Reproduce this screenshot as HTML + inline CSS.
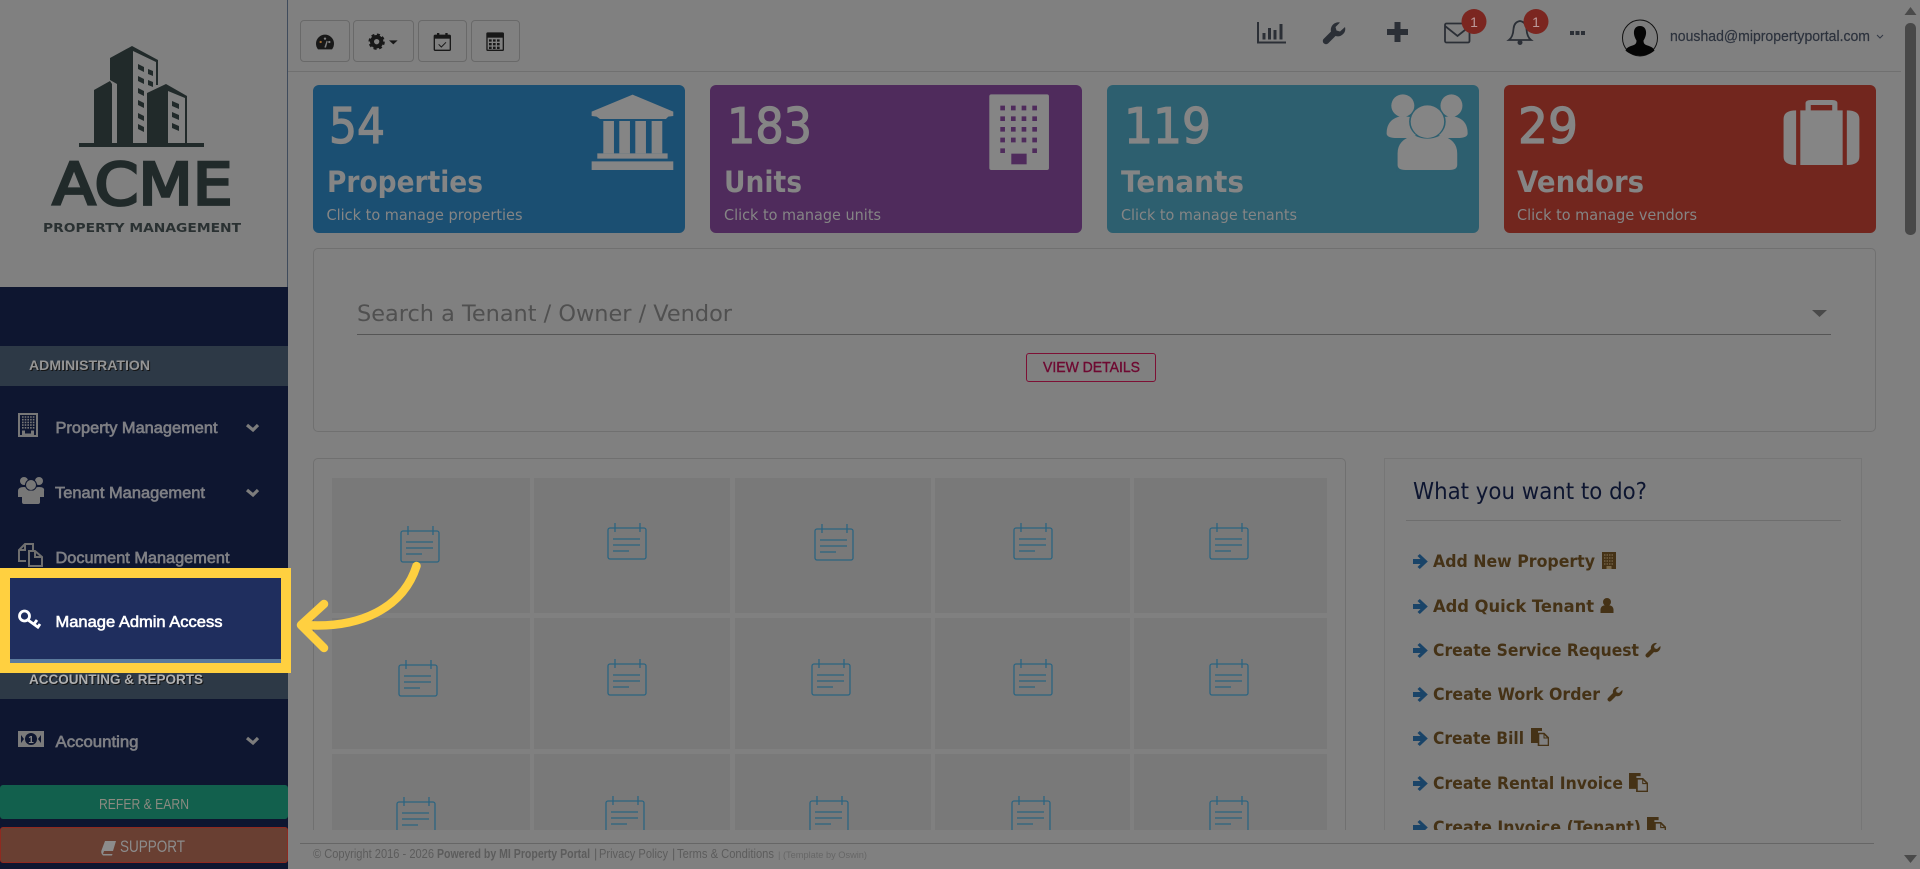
<!DOCTYPE html>
<html lang="en"><head><meta charset="utf-8"><title>Dashboard</title>
<style>
html,body{margin:0;padding:0;width:1920px;height:869px;overflow:hidden;background:#808080}
#root{position:relative;width:1920px;height:869px;overflow:hidden;background:#808080}
.b{position:absolute;box-sizing:border-box}
.btn{border:1px solid #696969;border-radius:4px;top:20px;height:42px}
.card{top:85px;height:148px;width:372px;border-radius:6px}
.tile{background:#797979}
svg#L{position:absolute;left:0;top:0}
text{font-family:"Liberation Sans",sans-serif}
.d{font-family:"DejaVu Sans",sans-serif}
.num{font-family:"DejaVu Sans",sans-serif;font-size:49px;fill:#858585;stroke:#858585;stroke-width:1.3px}
.ttl{font-family:"DejaVu Sans",sans-serif;font-size:29px;font-weight:700;fill:#858585}
.sub{font-family:"DejaVu Sans",sans-serif;font-size:15px;fill:#858585}
.act{font-family:"DejaVu Sans",sans-serif;font-size:16.5px;font-weight:700;fill:#453216}
.nav{font-size:16px;fill:#7e7f84;stroke:#7e7f84;stroke-width:.65px}
.hd{font-size:14px;font-weight:700;filter:drop-shadow(1px 1px 0 #151515)}
.ft{font-size:12.5px;fill:#5c5c5c}
</style></head><body>
<div id="root">
<!-- sidebar -->
<div class="b" style="left:0;top:0;width:288px;height:287px;background:#808080;border-right:1px solid #3f4b5c"></div>
<div class="b" style="left:0;top:287px;width:288px;height:582px;background:#0e1630"></div>
<div class="b" style="left:0;top:346px;width:288px;height:40px;background:#2d3946"></div>
<div class="b" style="left:0;top:660px;width:288px;height:39px;background:#2d3946"></div>
<div class="b" style="left:0;top:785px;width:288px;height:34px;background:#12604d;border-radius:3px"></div>
<div class="b" style="left:0;top:827px;width:288px;height:36px;background:#693f32;border:1px solid #8f2a20;border-radius:3px"></div>
<!-- toolbar -->
<div class="b" style="left:288px;top:71px;width:1613px;height:1px;background:#707070"></div>
<div class="b btn" style="left:300px;width:50px"></div>
<div class="b btn" style="left:353px;width:61px"></div>
<div class="b btn" style="left:418px;width:49px"></div>
<div class="b btn" style="left:471px;width:49px"></div>
<!-- cards -->
<div class="b card" style="left:313px;background:#1b4f72"></div>
<div class="b card" style="left:710px;background:#4f2b5c"></div>
<div class="b card" style="left:1107px;background:#2d5f6f"></div>
<div class="b card" style="left:1504px;background:#72261e"></div>
<!-- panels -->
<div class="b" style="left:313px;top:248px;width:1563px;height:184px;border:1px solid #707070;border-radius:5px"></div>
<div class="b" style="left:357px;top:334px;width:1474px;height:1px;background:#555"></div>
<div class="b" style="left:1026px;top:353px;width:130px;height:29px;border:1px solid #7d1035;border-radius:3px"></div>
<div class="b" style="left:313px;top:458px;width:1033px;height:390px;border:1px solid #707070;border-radius:5px"></div>
<div class="b" style="left:1384px;top:458px;width:478px;height:390px;border:1px solid #767676"></div>
<div class="b" style="left:1406px;top:520px;width:435px;height:1px;background:#6e6e6e"></div>
<!-- tiles -->
<div class="b tile" style="left:332px;top:478px;width:198px;height:135px"></div>
<div class="b tile" style="left:534px;top:478px;width:196px;height:135px"></div>
<div class="b tile" style="left:735px;top:478px;width:196px;height:135px"></div>
<div class="b tile" style="left:935px;top:478px;width:195px;height:135px"></div>
<div class="b tile" style="left:1134px;top:478px;width:193px;height:135px"></div>
<div class="b tile" style="left:332px;top:618px;width:198px;height:131px"></div>
<div class="b tile" style="left:534px;top:618px;width:196px;height:131px"></div>
<div class="b tile" style="left:735px;top:618px;width:196px;height:131px"></div>
<div class="b tile" style="left:935px;top:618px;width:195px;height:131px"></div>
<div class="b tile" style="left:1134px;top:618px;width:193px;height:131px"></div>
<div class="b tile" style="left:332px;top:754px;width:198px;height:90px"></div>
<div class="b tile" style="left:534px;top:754px;width:196px;height:90px"></div>
<div class="b tile" style="left:735px;top:754px;width:196px;height:90px"></div>
<div class="b tile" style="left:935px;top:754px;width:195px;height:90px"></div>
<div class="b tile" style="left:1134px;top:754px;width:193px;height:90px"></div>

<svg id="L" width="1920" height="869" viewBox="0 0 1920 869" xmlns="http://www.w3.org/2000/svg">
<defs>
<symbol id="cal" viewBox="0 0 40 37" width="40" height="37" overflow="visible"><g fill="none" stroke="#2c6480" stroke-width="1.3"><rect x="1" y="5" width="38" height="31" rx="2"/><path d="M8 0V9M33 0V9"/><path d="M6 16H33M6 22H33M6 28H22"/></g></symbol>
<symbol id="arr" viewBox="0 0 15 15" width="15" height="15"><path d="M0 5H7.500L4.500 2 6.800 0 14.800 7.500 6.800 15 4.500 13 7.500 10H0Z" fill="#1a4468"/></symbol>
<symbol id="wr" viewBox="0 0 24 24"><path d="M23 6l-5 4.500-3.500-1-1-3.500L18 1.500A7.500 7.500 0 0 0 9 10.500L1.500 18a3.200 3.200 0 0 0 4.500 4.500L13.500 15A7.500 7.500 0 0 0 23 6Z"/></symbol>
<symbol id="doc" viewBox="0 0 18 18"><path d="M0 0H11V3H7V15H0Z" fill="#453216"/><path d="M7.500 5.500H13L17.500 10V17.500H7.500Z" fill="none" stroke="#453216" stroke-width="1.600"/><path d="M13 5.500V10H17.500" fill="none" stroke="#453216" stroke-width="1"/></symbol>
</defs>

<!-- logo -->
<g fill="#212a2a">
<path d="M94 90L110 81 112 84V143H94Z"/>
<path d="M110 58L132 46 158 60V85H156V62L133 51V143H117V84L110 80Z"/>
<path d="M147 93L166 84 187 96V143H185V98L168 91V143H147Z"/>
<rect x="79" y="143" width="125" height="4"/>
<path d="M138 64l6 3v5l-6-3zM148 69l5 2v5l-5-2zM138 76l6 3v5l-6-3zM148 80l5 2v5l-5-2zM138 88l6 3v5l-6-3zM138 100l6 3v5l-6-3zM138 113l6 3v5l-6-3zM138 124l6 3v5l-6-3zM172 101l7 3v5l-7-3zM172 112l7 3v5l-7-3zM172 123l7 3v5l-7-3z"/>
<text class="d" x="52.500" y="204.500" font-size="58" stroke="#212a2a" stroke-width="2.800" textLength="180" lengthAdjust="spacingAndGlyphs">ACME</text>
<text class="d" x="43" y="232" font-size="12.500" font-weight="700" textLength="198" lengthAdjust="spacingAndGlyphs" fill="#2a3132">PROPERTY MANAGEMENT</text>
</g>

<!-- sidebar -->
<text class="hd" x="29" y="370" fill="#959595" textLength="121" lengthAdjust="spacingAndGlyphs">ADMINISTRATION</text>
<rect x="19" y="414" width="18" height="22" fill="none" stroke="#777" stroke-width="2"/>
<g fill="none" stroke="#777" stroke-width="1.600" stroke-dasharray="1.600 1.100"><path d="M22 417H34.500M22 419.700H34.500M22 422.400H34.500M22 425.100H34.500M22 427.800H34.500"/></g>
<path d="M22 430.500h3v3h6v-3h3v5H22Z" fill="#777"/>
<text class="nav" x="55.500" y="433" textLength="162" lengthAdjust="spacingAndGlyphs">Property Management</text>
<polyline points="247,425 253,430 258,425" fill="none" stroke="#7c7c7c" stroke-width="3.200"/>
<g fill="#777"><circle cx="24" cy="481" r="4"/><circle cx="39" cy="481" r="4"/><path d="M18 497v-6q0-4 6-4t6 4v6ZM33 497v-6q0-4 6-4t5 4v6Z"/><circle cx="31" cy="485" r="5.500" stroke="#0e1630"/><path d="M22 502v-6q0-5.500 9-5.500t9 5.500v6q0 2-2 2H24q-2 0-2-2Z"/></g>
<text class="nav" x="55" y="498" textLength="150" lengthAdjust="spacingAndGlyphs">Tenant Management</text>
<polyline points="247,490 253,495 258,490" fill="none" stroke="#7c7c7c" stroke-width="3.200"/>
<g fill="none" stroke="#6f6f6f" stroke-width="2"><path d="M26 561H19V550L25 544H33V551"/><path d="M25 544V550H19"/><path d="M29 551H35L42 557V566H29Z"/><path d="M35 551V557H42"/></g>
<text class="nav" x="55.500" y="563" textLength="174" lengthAdjust="spacingAndGlyphs">Document Management</text>

<text class="hd" x="29" y="684" fill="#b0b0b0" textLength="174" lengthAdjust="spacingAndGlyphs">ACCOUNTING &amp; REPORTS</text>
<rect x="18" y="731" width="26" height="16" fill="#7b7b7b"/>
<circle cx="31" cy="739" r="6" fill="#0e1630"/><path d="M21 735l3 4-3 4ZM41 735l-3 4 3 4Z" fill="#0e1630"/>
<text x="31" y="743" font-size="10" font-weight="700" fill="#888" text-anchor="middle">1</text>
<text class="nav" x="55.500" y="747" textLength="83" lengthAdjust="spacingAndGlyphs">Accounting</text>
<polyline points="247,738 253,743 258,738" fill="none" stroke="#7c7c7c" stroke-width="3.200"/>
<text x="99" y="809" font-size="15" fill="#8b8a80" textLength="90" lengthAdjust="spacingAndGlyphs">REFER &amp; EARN</text>
<path d="M105 841H116L113 851H104L103 854H112.500L112 855.500H103Q100 853 102 849Z" fill="#8c8c8c"/>
<text x="120" y="852" font-size="16.500" fill="#8c8c8c" textLength="65" lengthAdjust="spacingAndGlyphs">SUPPORT</text>

<!-- toolbar icons -->
<g transform="translate(290,0) scale(.3333)" fill="#181818">
<path d="M84 148A27 27 0 1 1 126 148Z"/><circle cx="92" cy="126" r="3.500" fill="#a06a30"/><circle cx="105" cy="116" r="3.500" fill="#808080"/><circle cx="118" cy="126" r="3.500" fill="#808080"/><path d="M103 142L110 122 113 124 108 143Z" fill="#808080"/>
<circle cx="260" cy="125" r="14" fill="none" stroke="#181818" stroke-width="12"/><circle cx="260" cy="125" r="21" fill="none" stroke="#181818" stroke-width="7" stroke-dasharray="9 7.500"/>
<path d="M297 121H323L310 133Z"/>
<rect x="433" y="106" width="48" height="45" rx="3" fill="none" stroke="#181818" stroke-width="4"/><rect x="433" y="106" width="48" height="10"/><path d="M441 99h7v12h-7zM466 99h7v12h-7z"/><path d="M446 133l8 8 14-14" fill="none" stroke="#181818" stroke-width="3"/>
<rect x="591" y="99" width="49" height="52" rx="2" fill="none" stroke="#181818" stroke-width="4"/><rect x="591" y="99" width="49" height="14"/><path d="M597 118h8v7h-8zM609 118h8v7h-8zM621 118h8v7h-8zM597 129h8v7h-8zM609 129h8v7h-8zM621 129h8v7h-8zM597 140h8v7h-8zM609 140h8v7h-8zM621 140h8v7h-8z"/>
</g>

<!-- top right -->
<g fill="none" stroke="#2b2f36" stroke-width="2">
<path d="M1258 22V42.500H1286"/>
<path d="M1264 33V39.500M1269.500 28V39.500M1275 30V39.500M1281 24V39.500" stroke-width="3"/>
</g>
<use href="#wr" x="1322" y="21" width="24" height="24" fill="#2b2f36"/>
<path d="M1394.500 22H1400.500V29H1408V35H1400.500V42H1394.500V35H1387V29H1394.500Z" fill="#2b2f36"/>
<g fill="none" stroke="#2b2f36" stroke-width="1.800"><rect x="1445" y="23.500" width="24.500" height="19" rx="1.500"/><path d="M1445 26L1457.500 36 1470 26"/></g>
<g fill="none" stroke="#2b2f36" stroke-width="1.800"><path d="M1509 40Q1513 37 1513.500 29Q1514 22 1520 21Q1526 22 1526.500 29Q1527 37 1531 40Z"/></g><circle cx="1520" cy="42.500" r="2.500" fill="#2b2f36"/>
<circle cx="1474" cy="21.500" r="12.500" fill="#7b2620"/><circle cx="1536" cy="21.500" r="12.500" fill="#7b2620"/>
<text x="1474" y="27" font-size="14" fill="#b99" text-anchor="middle">1</text><text x="1536" y="27" font-size="14" fill="#b99" text-anchor="middle">1</text>
<path d="M1570 31h4v4h-4zM1575.500 31h4v4h-4zM1581 31h4v4h-4z" fill="#2b2f36"/>
<ellipse cx="1640" cy="38" rx="17.500" ry="18" fill="#7d7d7d" stroke="#111" stroke-width="1"/>
<path d="M1640 26c-4.500 0-6.500 3.500-6 8 .3 2.500 1.500 5 2.500 6.500 0 3-1 4-4 5-3 1-6 2-7 5 3.500 3.500 9 5 14.500 5s11-1.500 14.500-5c-1-3-4-4-7-5-3-1-4-2-4-5 1-1.500 2.200-4 2.500-6.500.5-4.500-1.500-8-6-8Z" fill="#050505"/>
<text x="1670" y="41" font-size="15" fill="#2c323d" stroke="#2c323d" stroke-width=".2" textLength="200" lengthAdjust="spacingAndGlyphs">noushad@mipropertyportal.com</text>
<polyline points="1877,35 1880,38 1883,35" fill="none" stroke="#323844" stroke-width="1"/>

<!-- scrollbar -->
<rect x="1905" y="23" width="11" height="212" rx="5" fill="#484848"/>
<path d="M1910.500 7L1916.500 15H1904.500Z" fill="#4a4a4a"/>
<path d="M1904 855H1917L1910.500 863Z" fill="#4a4a4a"/>

<!-- card contents -->
<text class="num" x="329" y="143" textLength="56" lengthAdjust="spacingAndGlyphs">54</text>
<text class="ttl" x="327" y="192" textLength="156" lengthAdjust="spacingAndGlyphs">Properties</text>
<text class="sub" x="326.500" y="220" textLength="196" lengthAdjust="spacingAndGlyphs">Click to manage properties</text>
<g transform="translate(290,0) scale(.3333)" fill="#858585"><path d="M1028 284L1150 335V348L1135 350 1128 357H930L920 350 905 348V335Z"/><path d="M940 363h32v97h-32zM988 363h32v97h-32zM1036 363h32v97h-32zM1085 363h32v97h-32z"/><path d="M922 460h211v16H922zM905 484h245v26H905z"/></g>

<text class="num" x="727" y="143" textLength="85" lengthAdjust="spacingAndGlyphs">183</text>
<text class="ttl" x="724" y="192" textLength="78" lengthAdjust="spacingAndGlyphs">Units</text>
<text class="sub" x="724" y="220" textLength="157" lengthAdjust="spacingAndGlyphs">Click to manage units</text>
<g transform="translate(700,70) scale(.3333)"><rect x="868" y="73" width="179" height="227" rx="6" fill="#858585"/><g fill="#4f2b5c"><path d="M901 107h14v14h-14zM933 107h14v14h-14zM965 107h14v14h-14zM997 107h14v14h-14zM901 139h14v14h-14zM933 139h14v14h-14zM965 139h14v14h-14zM997 139h14v14h-14zM901 171h14v14h-14zM933 171h14v14h-14zM965 171h14v14h-14zM997 171h14v14h-14zM901 203h14v14h-14zM933 203h14v14h-14zM965 203h14v14h-14zM997 203h14v14h-14zM901 235h14v14h-14zM997 235h14v14h-14z"/><rect x="934" y="251" width="46" height="32"/></g></g>

<text class="num" x="1124" y="143" textLength="87" lengthAdjust="spacingAndGlyphs">119</text>
<text class="ttl" x="1121" y="192" textLength="123" lengthAdjust="spacingAndGlyphs">Tenants</text>
<text class="sub" x="1121" y="220" textLength="176" lengthAdjust="spacingAndGlyphs">Click to manage tenants</text>
<g transform="translate(1100,70) scale(.523,.3333)"><g fill="#858585"><ellipse cx="579" cy="107" rx="22" ry="34"/><ellipse cx="672" cy="107" rx="21" ry="34"/><path d="M548 190q0-45 30-52l30 6v60h-40q-20 0-20-14ZM703 190q0-45-30-52l-30 6v60h40q20 0 20-14Z"/></g><ellipse cx="626" cy="155" rx="35" ry="52" fill="#2d5f6f"/><path d="M566 305V250q0-50 60-60 60 10 60 60v55Z" fill="#2d5f6f"/><ellipse cx="626" cy="155" rx="32" ry="49" fill="#858585"/><path d="M569 285V250q0-42 32-54 25 20 50 0 32 12 32 54v35q0 15-15 15H584q-15 0-15-15Z" fill="#858585"/></g>

<text class="num" x="1518" y="143" textLength="60" lengthAdjust="spacingAndGlyphs">29</text>
<text class="ttl" x="1517" y="192" textLength="127" lengthAdjust="spacingAndGlyphs">Vendors</text>
<text class="sub" x="1517" y="220" textLength="180" lengthAdjust="spacingAndGlyphs">Click to manage vendors</text>
<g transform="translate(1100,70) scale(.523,.3333)"><path d="M1331 121q-24 0-24 26V260q0 25 24 25ZM1428 121q24 0 24 26V260q0 25-24 25ZM1339 121h10V100q0-10 10-10h41q10 0 10 10v21h10V285H1339ZM1359 121h41v-16h-41Z" fill="#858585" fill-rule="evenodd"/></g>

<!-- search -->
<text class="d" x="357" y="321" font-size="22" fill="#505050" textLength="375" lengthAdjust="spacingAndGlyphs">Search a Tenant / Owner / Vendor</text>
<path d="M1812 310H1827L1819.500 317Z" fill="#4a4a4a"/>
<text x="1043" y="372" font-size="15" fill="#6e0a32" textLength="97" lengthAdjust="spacingAndGlyphs" stroke="#6e0a32" stroke-width=".4">VIEW DETAILS</text>

<!-- calendars -->
<use href="#cal" x="400" y="526"/><use href="#cal" x="607" y="523"/><use href="#cal" x="814" y="524"/><use href="#cal" x="1013" y="523"/><use href="#cal" x="1209" y="523"/>
<use href="#cal" x="398" y="660"/><use href="#cal" x="607" y="659"/><use href="#cal" x="811" y="659"/><use href="#cal" x="1013" y="659"/><use href="#cal" x="1209" y="659"/>
<use href="#cal" x="396" y="797"/><use href="#cal" x="605" y="796"/><use href="#cal" x="809" y="796"/><use href="#cal" x="1011" y="796"/><use href="#cal" x="1209" y="796"/>

<!-- actions -->
<text class="d" x="1413" y="499" font-size="23" fill="#0d1530" textLength="234" lengthAdjust="spacingAndGlyphs">What you want to do?</text>
<use href="#arr" x="1413" y="554"/><text class="act" x="1433" y="567" textLength="162" lengthAdjust="spacingAndGlyphs">Add New Property</text>
<use href="#arr" x="1413" y="599"/><text class="act" x="1433" y="612" textLength="161" lengthAdjust="spacingAndGlyphs">Add Quick Tenant</text>
<use href="#arr" x="1413" y="643"/><text class="act" x="1433" y="656" textLength="206" lengthAdjust="spacingAndGlyphs">Create Service Request</text>
<use href="#arr" x="1413" y="687"/><text class="act" x="1433" y="700" textLength="167" lengthAdjust="spacingAndGlyphs">Create Work Order</text>
<use href="#arr" x="1413" y="731"/><text class="act" x="1433" y="744" textLength="91" lengthAdjust="spacingAndGlyphs">Create Bill</text>
<use href="#arr" x="1413" y="776"/><text class="act" x="1433" y="789" textLength="190" lengthAdjust="spacingAndGlyphs">Create Rental Invoice</text>
<use href="#arr" x="1413" y="820"/><text class="act" x="1433" y="833" textLength="208" lengthAdjust="spacingAndGlyphs">Create Invoice (Tenant)</text>
<rect x="1602" y="552" width="14" height="17" fill="#453216"/><g fill="none" stroke="#7a6a4c" stroke-width="1.200" stroke-dasharray="1.500 1"><path d="M1604 555H1614M1604 558H1614M1604 561H1614M1604 564H1614"/></g><rect x="1606.500" y="566" width="5" height="3" fill="#7a6a4c"/>
<circle cx="1607" cy="602" r="4" fill="#453216"/><path d="M1600.500 613v-3q0-5 6.500-5t6.500 5v3Z" fill="#453216"/>
<use href="#wr" x="1645" y="642" width="16" height="16" fill="#453216"/>
<use href="#wr" x="1607" y="686" width="16" height="16" fill="#453216"/>
<use href="#doc" x="1531" y="728" width="18" height="18"/>
<use href="#doc" x="1629" y="773" width="19" height="19"/>
<use href="#doc" x="1647" y="817" width="19" height="19"/>

<!-- footer -->
<rect x="288" y="830" width="1616" height="39" fill="#808080"/>
<rect x="300" y="843" width="1574" height="1" fill="#666"/>
<text class="ft" x="313" y="858" textLength="121" lengthAdjust="spacingAndGlyphs">© Copyright 2016 - 2026</text>
<text class="ft" x="437" y="858" font-weight="700" fill="#585858" textLength="153" lengthAdjust="spacingAndGlyphs">Powered by MI Property Portal</text>
<text class="ft" x="594" y="858">|</text>
<text class="ft" x="599" y="858" textLength="69" lengthAdjust="spacingAndGlyphs">Privacy Policy</text>
<text class="ft" x="672" y="858">|</text>
<text class="ft" x="677" y="858" textLength="97" lengthAdjust="spacingAndGlyphs">Terms &amp; Conditions</text>
<text x="778" y="858" font-size="9.500" fill="#666" textLength="89" lengthAdjust="spacingAndGlyphs">| (Template by Oswin)</text>

<!-- highlight -->
<rect x="5" y="573" width="281" height="95" fill="#1f2e5e" stroke="#ffd040" stroke-width="10"/>
<rect x="10" y="659" width="271" height="4" fill="#5b7a9c"/>
<g fill="none" stroke="#fff" stroke-width="2.800"><circle cx="24.500" cy="616" r="5"/><path d="M28 620L39 628M34 624L37 620M38 627L40 624"/></g>
<text x="55.500" y="627" font-size="16" fill="#fff" stroke="#fff" stroke-width=".6" textLength="167" lengthAdjust="spacingAndGlyphs">Manage Admin Access</text>
<g fill="none" stroke="#ffd040" stroke-width="8.500" stroke-linecap="round" stroke-linejoin="round"><path d="M416.500 566C403 608 360 629 304 625"/><path d="M324 604L301 625 324 648"/></g>
</svg>
</div>
</body></html>
